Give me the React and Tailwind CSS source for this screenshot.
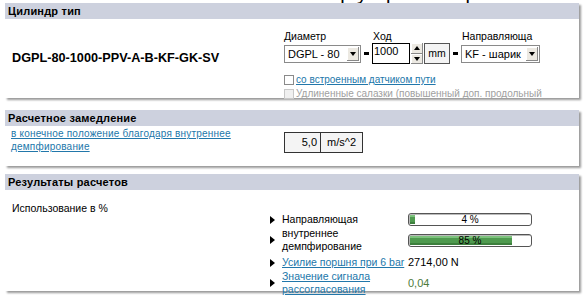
import React from "react";

const font = { fontFamily: '"Liberation Sans", Arial, sans-serif' };

function Panel({ title, children, className }) {
    return (
        <div className={"ml-[5px] w-[574px] bg-white shadow-[2px_2px_2px_rgba(0,0,0,0.4)] " + (className || "")}>
            <div className="h-[16px] bg-[#cdd1de] pl-[3px] text-[11px] font-bold leading-[16px] tracking-[0.2px] text-black">
                {title}
            </div>
            {children}
        </div>
    );
}

function Arrow() {
    return (
        <div className="flex h-full w-[12px] items-center justify-center bg-[#ece9e2] shadow-[inset_-1px_-1px_0_#888,inset_1px_1px_0_#fff]">
            <span className="block h-0 w-0 border-x-[3px] border-t-[4px] border-x-transparent border-t-black" />
        </div>
    );
}

function Select({ value, width }) {
    return (
        <div className="flex h-[21px] items-center">
            <div className={"flex h-[18px] items-center border border-[#8a8a8a] bg-white p-[1px] " + width}>
                <div className="min-w-0 flex-1 whitespace-nowrap pl-[2px] text-[11px] leading-[14px]">{value}</div>
                <Arrow />
            </div>
        </div>
    );
}

function Dash() {
    return <div className="mx-[3px] mb-[9px] h-[3px] w-[5px] bg-black" />;
}

function Bullet() {
    return <span className="block h-0 w-0 border-y-[4px] border-l-[5px] border-y-transparent border-l-black" />;
}

function Bar({ percent, label }) {
    return (
        <div className="relative h-[13px] w-[124px] rounded-[3px] border border-[#555] bg-white p-[1px] shadow-[inset_1px_1px_0_#bbb]">
            <div
                className="h-full bg-[#4f9a4f] shadow-[inset_0_-2px_0_#3d7f3d,inset_0_2px_0_#7cc27c]"
                style={{ width: percent + "%" }}
            />
            <div className="absolute inset-0 text-center text-[10px] leading-[11px] text-black">{label}</div>
        </div>
    );
}

export default function App() {
    return (
        <div className="relative h-[303px] w-[586px] overflow-hidden bg-white text-black" style={font}>
            <div className="h-[3px] overflow-hidden">
                <div className="-mt-[17px] whitespace-nowrap pl-[290px] text-[20px] leading-[20px]">Выбор устройства р</div>
            </div>

            <Panel title="Цилиндр тип">
                <div className="flex h-[79px]">
                    <div className="flex w-[279px] items-center whitespace-nowrap pl-[7px] text-[12.7px] font-bold">
                        DGPL-80-1000-PPV-A-B-KF-GK-SV
                    </div>
                    <div className="flex flex-col pt-[11px] text-[10.5px]">
                        <div className="flex items-end">
                            <div className="flex flex-col">
                                <div className="leading-[13px]">Диаметр</div>
                                <Select value="DGPL - 80" width="w-[77px]" />
                            </div>
                            <Dash />
                            <div className="flex flex-col">
                                <div className="pl-[1px] leading-[13px]">Ход</div>
                                <div className="flex h-[21px]">
                                    <div className="flex w-[38px] items-start border border-black pl-[1px] text-[11px] leading-[15px]">1000</div>
                                    <div className="ml-[1px] flex w-[12px] flex-col">
                                        <div className="flex flex-1 items-center justify-center bg-[#ece9e2] shadow-[inset_-1px_-1px_0_#888,inset_1px_1px_0_#fff]">
                                            <span className="block h-0 w-0 border-x-[3px] border-b-[4px] border-x-transparent border-b-black" />
                                        </div>
                                        <div className="flex flex-1 items-center justify-center bg-[#ece9e2] shadow-[inset_-1px_-1px_0_#888,inset_1px_1px_0_#fff]">
                                            <span className="block h-0 w-0 border-x-[3px] border-t-[4px] border-x-transparent border-t-black" />
                                        </div>
                                    </div>
                                    <div className="ml-[1px] flex w-[26px] items-center justify-center border border-[#555] bg-[#f4f4f4] text-[10.5px]">mm</div>
                                </div>
                            </div>
                            <Dash />
                            <div className="flex flex-col">
                                <div className="pl-[1px] leading-[13px]">Направляюща</div>
                                <Select value="KF - шарик" width="w-[79px]" />
                            </div>
                        </div>
                        <div className="mt-[10px] flex items-center text-[10px] leading-[12px]">
                            <span className="block h-[10px] w-[10px] border border-[#8a8a8a] bg-white" />
                            <span className="ml-[2px] text-[#2277aa] underline">со встроенным датчиком пути</span>
                        </div>
                        <div className="mt-[2px] flex items-center whitespace-nowrap text-[10px] leading-[12px]">
                            <span className="block h-[10px] w-[10px] border border-[#c8c8c8] bg-[#f0f0f0]" />
                            <span className="ml-[2px] text-[#a0a0a0]">Удлиненные салазки (повышенный доп. продольный</span>
                        </div>
                    </div>
                </div>
            </Panel>

            <Panel title="Расчетное замедление" className="mt-[12px]">
                <div className="flex h-[40px]">
                    <div className="w-[279px] pl-[6px] pt-[1px] text-[10px] leading-[13px]">
                        <span className="text-[#2277aa] underline tracking-[0.2px]">в конечное положение благодаря внутреннее</span>
                        <br />
                        <span className="text-[#2277aa] underline tracking-[0.2px]">демпфирование</span>
                    </div>
                    <div className="flex pt-[6px]">
                        <div className="flex h-[21px] w-[37px] items-center justify-end border border-[#333] bg-[#f4f4f4] pr-[3px] text-[11px]">5,0</div>
                        <div className="flex h-[21px] w-[42px] items-center justify-center border border-l-0 border-[#333] bg-[#f4f4f4] text-[11px]">m/s^2</div>
                    </div>
                </div>
            </Panel>

            <Panel title="Результаты расчетов" className="mt-[8px]">
                <div className="flex h-[101px]">
                    <div className="w-[265px] pl-[7px] pt-[11px] text-[10.5px]">Использование в %</div>
                    <div className="flex flex-col pt-[23px] text-[10.5px] leading-[13px]">
                        <div className="flex h-[13px] items-center">
                            <div className="w-[12px]"><Bullet /></div>
                            <div className="w-[126px]">Направляющая</div>
                            <Bar percent={4} label="4 %" />
                        </div>
                        <div className="mt-[1px] flex h-[26px] items-center">
                            <div className="w-[12px]"><Bullet /></div>
                            <div className="w-[126px]">внутреннее<br />демпфирование</div>
                            <Bar percent={85} label="85 %" />
                        </div>
                        <div className="mt-[3px] flex h-[13px] items-center">
                            <div className="w-[12px]"><Bullet /></div>
                            <div className="w-[126px] whitespace-nowrap text-[#2277aa] underline">Усилие поршня при 6 bar</div>
                            <div className="text-[11px]">2714,00 N</div>
                        </div>
                        <div className="mt-[1px] flex h-[26px] items-center">
                            <div className="w-[12px]"><Bullet /></div>
                            <div className="w-[126px] text-[#2277aa]">
                                <span className="underline">Значение сигнала</span>
                                <br />
                                <span className="underline">рассогласования</span>
                            </div>
                            <div className="text-[11px] text-[#4d7a3a]">0,04</div>
                        </div>
                    </div>
                </div>
            </Panel>
        </div>
    );
}
